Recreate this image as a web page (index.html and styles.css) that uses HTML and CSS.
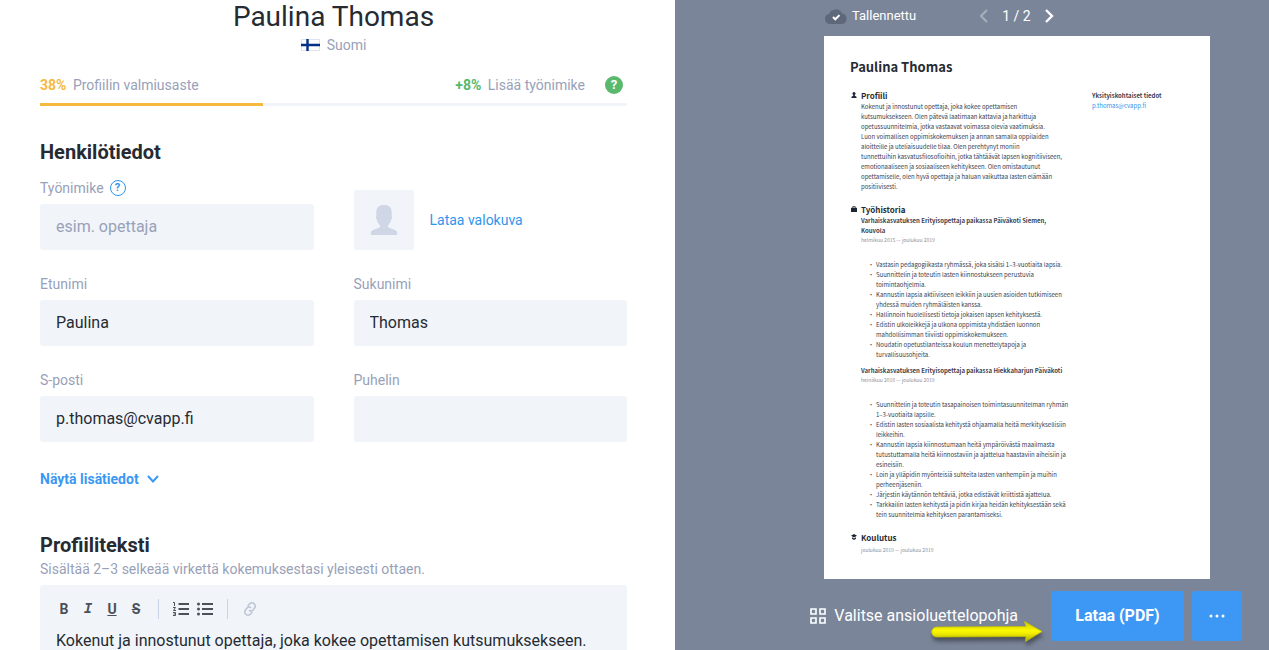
FILE: index.html
```html
<!DOCTYPE html>
<html lang="fi">
  <head>
    <meta charset="utf-8">
    <meta name="viewport" content="width=device-width,initial-scale=1">
    <title>Paulina Thomas</title>
    <link rel="stylesheet" href="styles.css">
  </head>

  <body>
    <main class="editor">
      <h1 class="name">Paulina Thomas</h1>
      <div class="language">
        <svg width="19" height="12" viewBox="0 0 19 12">
          <rect x=".5" y=".5" width="18" height="11" fill="#fff" stroke="#dfe3ee"/>
          <path d="M0 6h19M6.500 0v12" stroke="#003087" stroke-width="2.400"/>
        </svg>
        <span>Suomi</span>
      </div>

      <div class="status">
        <span><b class="score">38%</b> Profiilin valmiusaste</span>
        <span class="tip"><b class="bonus">+8%</b> Lisää työnimike</span>
        <button class="help-solid" type="button">?</button>
      </div>
      <div class="progress"><div class="progress-value" style="width: 38%"></div></div>

      <h2>Henkilötiedot</h2>
      <form class="fields">
        <div class="field">
          <div class="label-row">
            <label for="job">Työnimike</label>
            <button class="help" type="button">?</button>
          </div>
          <input id="job" type="text" placeholder="esim. opettaja">
        </div>
        <div class="photo">
          <div class="avatar">
            <svg width="26" height="30" viewBox="0 0 26 30">
              <path d="M13 0C8 0 5 2.500 5.300 8v3.500c-.6.500-.3 2.300.5 3 .6 2.500 1.500 4.500 3.200 6v1.800L2 25c-1.500.6-2 1.300-2 2.500V30h26v-2.500c0-1.200-.5-1.900-2-2.500l-7-2.700v-1.800c1.700-1.500 2.600-3.500 3.200-6 .8-.7 1.100-2.500.5-3V8C21 2.500 18 0 13 0z" fill="#cfd6e6"/>
            </svg>
          </div>
          <a href="#">Lataa valokuva</a>
        </div>
        <div class="field">
          <label for="first">Etunimi</label>
          <input id="first" type="text" value="Paulina">
        </div>
        <div class="field">
          <label for="last">Sukunimi</label>
          <input id="last" type="text" value="Thomas">
        </div>
        <div class="field">
          <label for="email">S-posti</label>
          <input id="email" type="email" value="p.thomas@cvapp.fi">
        </div>
        <div class="field">
          <label for="phone">Puhelin</label>
          <input id="phone" type="tel">
        </div>
      </form>
      <button class="more" type="button">
        Näytä lisätiedot
        <svg width="12" height="8" viewBox="0 0 12 8"><path d="M1 1l5 5.500L11 1" fill="none" stroke="currentColor" stroke-width="2"/></svg>
      </button>

      <h2>Profiiliteksti</h2>
      <p class="hint">Sisältää 2–3 selkeää virkettä kokemuksestasi yleisesti ottaen.</p>
      <div class="rich">
        <div class="toolbar">
          <button type="button">B</button>
          <button class="italic" type="button">I</button>
          <button class="underline" type="button">U</button>
          <button class="strike" type="button">S</button>
          <i class="sep"></i>
          <button type="button" aria-label="Numeroitu lista">
            <svg width="16" height="14" viewBox="0 0 16 14">
              <path d="M5.500 2H16M5.500 7H16M5.500 12H16" stroke="currentColor" stroke-width="2"/>
              <path d="M0 .5h1.500v3.500M0 5.500h2.500L.5 8.500H3M0 10.500h2.500v3H0M.5 12h2" fill="none" stroke="currentColor"/>
            </svg>
          </button>
          <button type="button" aria-label="Luettelo">
            <svg width="16" height="14" viewBox="0 0 16 14">
              <path d="M5 2h11M5 7h11M5 12h11" stroke="currentColor" stroke-width="2"/>
              <g fill="currentColor"><circle cx="1.500" cy="2" r="1.500"/><circle cx="1.500" cy="7" r="1.500"/><circle cx="1.500" cy="12" r="1.500"/></g>
            </svg>
          </button>
          <i class="sep"></i>
          <button class="link" type="button" aria-label="Linkki">
            <svg width="14" height="14" viewBox="0 0 14 14" fill="none" stroke="currentColor" stroke-width="1.500" stroke-linecap="round">
              <path d="M5 3.500l1.500-1.600a3.300 3.300 0 0 1 5.400 3.600L10 8a2.800 2.800 0 0 1-3.500.5M9 10.500l-1.500 1.600a3.300 3.300 0 0 1-5.400-3.600L4 6a2.800 2.800 0 0 1 3.500-.5"/>
            </svg>
          </button>
        </div>
        <div class="rich-text" contenteditable="true">Kokenut ja innostunut opettaja, joka kokee opettamisen kutsumuksekseen.</div>
      </div>
    </main>

    <aside class="preview">
      <header class="preview-bar">
        <svg width="22" height="15" viewBox="0 0 22 15">
          <path d="M5 15a5 5 0 0 1-1-9.900A7 7 0 0 1 17 4.500 5.300 5.300 0 0 1 17 15z" fill="#5f687a"/>
          <path d="M8 8l2.300 2.300 4.200-4.200" fill="none" stroke="#fff" stroke-width="2"/>
        </svg>
        <span class="saved">Tallennettu</span>
        <nav class="pager">
          <button type="button" aria-label="Edellinen" disabled>
            <svg width="9" height="14" viewBox="0 0 9 14"><path d="M8 1L2 7l6 6" fill="none" stroke="currentColor" stroke-width="2"/></svg>
          </button>
          <span>1 / 2</span>
          <button type="button" aria-label="Seuraava">
            <svg width="9" height="14" viewBox="0 0 9 14"><path d="M1 1l6 6-6 6" fill="none" stroke="currentColor" stroke-width="2.400"/></svg>
          </button>
        </nav>
      </header>

      <article class="resume">
        <h2 class="resume-name">Paulina Thomas</h2>
        <div class="resume-columns">
          <div>
            <section class="part">
              <svg class="part-icon" viewBox="0 0 6 6"><circle cx="3" cy="1.500" r="1.500"/><path d="M2.200 2.500h1.600v1.300L5.500 4.800V6H.5V4.800l1.700-1z"/></svg>
              <div>
                <h3>Profiili</h3>
                <p>Kokenut ja innostunut opettaja, joka kokee opettamisen<br>
                kutsumuksekseen. Olen pätevä laatimaan kattavia ja harkittuja<br>
                opetussuunnitelmia, jotka vastaavat voimassa olevia vaatimuksia.<br>
                Luon voimallisen oppimiskokemuksen ja annan samalla oppilaiden<br>
                aloitteille ja uteliaisuudelle tilaa. Olen perehtynyt moniin<br>
                tunnettuihin kasvatusfilosofioihin, jotka tähtäävät lapsen kognitiiviseen,<br>
                emotionaaliseen ja sosiaaliseen kehitykseen. Olen omistautunut<br>
                opettamiselle, olen hyvä opettaja ja haluan vaikuttaa lasten elämään<br>
                positiivisesti.</p>
              </div>
            </section>

            <section class="part">
              <svg class="part-icon" viewBox="0 0 6 6"><path d="M0 1.800h6V6H0z"/><path d="M1.800 2V.6h2.400V2" fill="none" stroke="#1e2532" stroke-width=".8"/></svg>
              <div>
                <h3>Työhistoria</h3>
                <h4>Varhaiskasvatuksen Erityisopettaja paikassa Päiväkoti Siemen,<br>Kouvola</h4>
                <p class="date">helmikuu 2015 — joulukuu 2019</p>
                <ul>
                  <li>Vastasin pedagogiikasta ryhmässä, joka sisälsi 1–3-vuotiaita lapsia.</li>
                  <li>Suunnittelin ja toteutin lasten kiinnostukseen perustuvia<br>toimintaohjelmia.</li>
                  <li>Kannustin lapsia aktiiviseen leikkiin ja uusien asioiden tutkimiseen<br>yhdessä muiden ryhmäläisten kanssa.</li>
                  <li>Hallinnoin huolellisesti tietoja jokaisen lapsen kehityksestä.</li>
                  <li>Edistin ulkoleikkejä ja ulkona oppimista yhdistäen luonnon<br>mahdollisimman tiiviisti oppimiskokemukseen.</li>
                  <li>Noudatin opetustilanteissa koulun menettelytapoja ja<br>turvallisuusohjeita.</li>
                </ul>
                <h4 class="next-job">Varhaiskasvatuksen Erityisopettaja paikassa Hiekkaharjun Päiväkoti</h4>
                <p class="date">heinäkuu 2018 — joulukuu 2019</p>
                <ul>
                  <li>Suunnittelin ja toteutin tasapainoisen toimintasuunnitelman ryhmän<br>1–3-vuotiaita lapsille.</li>
                  <li>Edistin lasten sosiaalista kehitystä ohjaamalla heitä merkityksellisiin<br>leikkeihin.</li>
                  <li>Kannustin lapsia kiinnostumaan heitä ympäröivästä maailmasta<br>tutustuttamalla heitä kiinnostaviin ja ajattelua haastaviin aiheisiin ja<br>esineisiin.</li>
                  <li>Loin ja ylläpidin myönteisiä suhteita lasten vanhempiin ja muihin<br>perheenjäseniin.</li>
                  <li>Järjestin käytännön tehtäviä, jotka edistävät kriittistä ajattelua.</li>
                  <li>Tarkkailin lasten kehitystä ja pidin kirjaa heidän kehityksestään sekä<br>tein suunnitelmia kehityksen parantamiseksi.</li>
                </ul>
              </div>
            </section>

            <section class="part">
              <svg class="part-icon" viewBox="0 0 6 6"><path d="M3 0l3 1.800-3 1.800-3-1.800zM1 3.200l2 1.200 2-1.200v1.500L3 6 1 4.700z"/></svg>
              <div>
                <h3>Koulutus</h3>
                <p class="date">joulukuu 2019 — joulukuu 2019</p>
              </div>
            </section>
          </div>

          <div class="contact">
            <h4>Yksityiskohtaiset tiedot</h4>
            <a href="#">p.thomas@cvapp.fi</a>
          </div>
        </div>
      </article>

      <footer class="actions">
        <button class="template" type="button">
          <svg width="16" height="16" viewBox="0 0 16 16" fill="none" stroke="currentColor" stroke-width="1.600">
            <path d="M1 1h5v5H1zM10 1h5v5h-5zM1 10h5v5H1zM10 10h5v5h-5z"/>
          </svg>
          Valitse ansioluettelopohja
        </button>
        <button class="download" type="button">Lataa (PDF)</button>
        <button class="dots" type="button" aria-label="Lisää">
          <svg width="16" height="4" viewBox="0 0 16 4" fill="#fff"><circle cx="2" cy="2" r="1.500"/><circle cx="8" cy="2" r="1.500"/><circle cx="14" cy="2" r="1.500"/></svg>
        </button>
        <svg class="pointer" width="120" height="30" viewBox="0 0 120 30">
          <defs>
            <linearGradient id="gold" x1="0" y1="0" x2="0" y2="1">
              <stop offset="0" stop-color="#c9c700"/>
              <stop offset=".45" stop-color="#fbf800"/>
              <stop offset=".6" stop-color="#f0ec00"/>
              <stop offset="1" stop-color="#aaa800"/>
            </linearGradient>
          </defs>
          <path d="M9 7L98 6.500 96.500 1.500 114 11.500 97.500 21.500 98 16.500 9 17C2 17 2 7 9 7z" fill="url(#gold)" stroke="#c5c100" stroke-width=".8" stroke-linejoin="round"/>
        </svg>
      </footer>
    </aside>
  </body>
</html>
```
FILE: styles.css
```css
/* general */
* { box-sizing: border-box; }
body {
  display: grid;
  grid-template-columns: minmax(0, 675fr) minmax(0, 594fr);
  height: 100vh;
  margin: 0;
  overflow: hidden;
  font-family: Roboto, sans-serif;
  font-size: 14px;
  line-height: 20px;
  color: #262b33;
}
h1, h2, h3, h4, p, ul { margin: 0; padding: 0; }
button { padding: 0; border: 0; background: none; font: inherit; color: inherit; }
a { color: #2f95ec; text-decoration: none; }
svg { flex: none; }

/* form side */
.editor { padding: 0 48px 0 40px; overflow: hidden; }
.name { font-size: 28px; font-weight: 400; line-height: 34px; text-align: center; }
.language { display: flex; justify-content: center; align-items: center; gap: 7px; margin-top: 1px; color: #98a1b8; }
.status { display: flex; align-items: center; margin-top: 20px; color: #98a1b8; }
.status b { margin-right: 3px; }
.score { color: #f6b93f; }
.bonus { color: #56b96b; }
.tip { margin-left: auto; }
.help-solid { width: 18px; height: 18px; margin: 0 4px 0 20px; border-radius: 50%; background: #5ab96d; color: #fff; font-size: 13px; font-weight: 700; line-height: 18px; }
.progress { height: 3px; margin-top: 8px; background: #f1f4f9; }
.progress-value { height: 100%; background: #f6b93f; }
.editor h2 { margin-top: 32px; font-size: 20px; font-weight: 700; line-height: 28px; }
.fields { display: grid; grid-template-columns: 1fr 1fr; gap: 24px 40px; margin-top: 12px; }
.field label { display: block; color: #98a1b8; }
.label-row { display: flex; align-items: center; gap: 6px; }
.help { width: 16px; height: 16px; border: 1px solid #2f95ec; border-radius: 50%; color: #2f95ec; font-size: 11px; font-weight: 700; line-height: 14px; }
.field input { display: block; width: 100%; height: 46px; margin-top: 6px; padding: 0 16px 2px; border: 0; border-radius: 3px; background: #f1f5fa; color: #262b33; font: inherit; font-size: 16px; }
.field input::placeholder { color: #98a1b8; }
.photo { display: flex; align-items: center; align-self: end; gap: 16px; }
.avatar { display: flex; justify-content: center; align-items: center; width: 60px; height: 60px; border-radius: 3px; background: #f1f5fa; }
.more { display: flex; align-items: center; gap: 8px; margin-top: 27px; color: #3a98f2; font-weight: 700; }
.more + h2 { margin-top: 42px; }
.hint { color: #98a1b8; }

/* rich text */
.rich { margin-top: 6px; padding: 12px 12px 40px; border-radius: 3px; background: #f1f5fa; }
.toolbar { display: flex; align-items: center; height: 24px; color: #4c5059; }
.toolbar button { display: flex; justify-content: center; align-items: center; width: 24px; height: 24px; font-weight: 700; }
.toolbar .italic { font-family: "Liberation Mono", monospace; font-style: italic; }
.toolbar .underline { text-decoration: underline; }
.toolbar .strike { text-decoration: line-through; }
.toolbar .link { color: #bcc4d4; }
.sep { width: 1px; height: 20px; margin: 0 10px; background: #cbd4e6; }
.rich-text { margin-top: 8px; padding: 0 4px; font-size: 16px; line-height: 24px; white-space: nowrap; }

/* preview side */
.preview { background: #7b8599; color: #fff; overflow: hidden; }
.preview-bar { display: flex; align-items: center; height: 36px; padding: 0 0 4px 150px; }
.saved { margin-left: 5px; font-size: 13px; }
.pager { display: flex; align-items: center; gap: 14px; margin-left: 63px; }
.pager span { font-size: 14px; }
.pager button { display: flex; }
.pager button:disabled { color: #a8afbd; }

/* resume page */
.resume { aspect-ratio: 386 / 543; margin: 0 59px 0 149px; padding: 21px 26px 0; background: #fff; color: #39404d; font-family: "Noto Sans CJK SC", sans-serif; font-size: 6px; line-height: 10px; white-space: nowrap; }
.resume-name { font-size: 13px; font-weight: 700; line-height: 20px; color: #262b33; }
.resume-columns { display: grid; grid-template-columns: 226px 1fr; gap: 16px; margin-top: 13px; }
.part { display: flex; gap: 4px; }
.part + .part { margin-top: 12px; }
.part-icon { width: 6px; height: 6px; margin: 2px 0 0 1px; fill: #1e2532; }
.resume h3 { font-size: 8px; font-weight: 700; line-height: 12px; color: #262b33; }
.resume h4 { font-size: 6px; font-weight: 700; line-height: 10px; }
.resume .next-job { margin-top: 6px; }
.date { font-size: 5px; line-height: 8px; color: #8a91a0; }
.resume h3 + .date { margin-top: 2px; }
.resume ul { margin-top: 16px; padding-left: 7px; list-style: none; }
.resume li { padding-left: 8px; text-indent: -8px; }
.resume li::before { content: "•"; display: inline-block; width: 8px; text-indent: 0; }
.contact { padding-top: 1px; }
.contact a { display: block; }

/* bottom bar */
.actions { position: relative; display: flex; justify-content: flex-end; align-items: center; gap: 8px; padding: 12px 27px 9px 0; font-size: 16px; }
.template { display: flex; align-items: center; gap: 8px; margin-right: 25px; }
.download, .dots { height: 50px; border-radius: 3px; background: #3c98f4; }
.download { width: 133px; font-weight: 700; }
.dots { display: flex; justify-content: center; align-items: center; width: 50px; }
.pointer { position: absolute; right: 221px; bottom: 0; filter: drop-shadow(1px 4px 2px rgba(0, 0, 0, .4)); }
```
